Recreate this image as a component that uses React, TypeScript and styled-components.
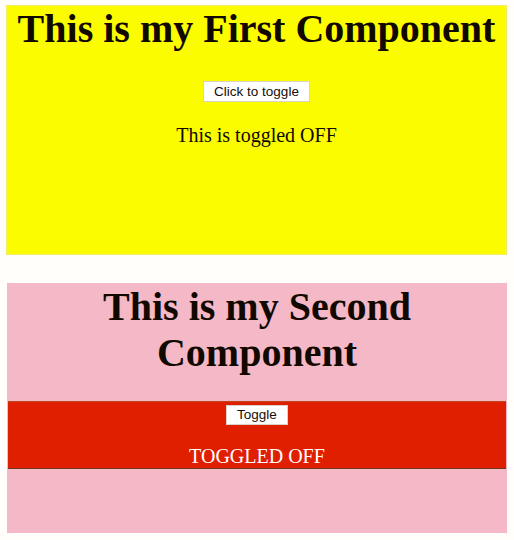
import React, { useState } from "react";
import styled, { createGlobalStyle } from "styled-components";

const Global = createGlobalStyle`
  html, body { margin: 0; padding: 0; background: #fffefb; }
  body { font-family: "Liberation Serif", "Times New Roman", serif; color: #110800; }
`;

const Page = styled.div`
  display: flex;
  flex-direction: column;
  gap: 28px;
  padding: 5px 7px 7px 6px;
  width: 501px;
`;

const Panel = styled.section<{ $bg: string; $border: string; $inset: number }>`
  box-sizing: border-box;
  height: 250px;
  margin-left: ${(p) => p.$inset}px;
  background: ${(p) => p.$bg};
  border: 1px solid ${(p) => p.$border};
  display: flex;
  flex-direction: column;
  align-items: center;
  text-align: center;
`;

const Title = styled.h1`
  margin: 0;
  font-size: 40px;
  line-height: 46px;
  font-weight: bold;
`;

const ToggleButton = styled.button<{ $mt: number; $h: number }>`
  margin-top: ${(p) => p.$mt}px;
  height: ${(p) => p.$h}px;
  box-sizing: border-box;
  padding: 0 10px;
  background: #ffffff;
  border: 1px solid #d8d2c8;
  border-radius: 0;
  font-family: "Liberation Sans", Arial, sans-serif;
  font-size: 13.5px;
  color: #1a0d05;
  line-height: 1;
  cursor: pointer;
`;

const Status = styled.p<{ $color: string; $mt: number; $upper?: boolean }>`
  margin: ${(p) => p.$mt}px 0 0;
  font-size: 20px;
  line-height: 23px;
  color: ${(p) => p.$color};
  text-transform: ${(p) => (p.$upper ? "uppercase" : "none")};
`;

const Band = styled.div<{ $on: boolean }>`
  align-self: stretch;
  margin-top: 25px;
  box-sizing: border-box;
  height: 68px;
  background: ${(p) => (p.$on ? "#1e9e30" : "#e01e00")};
  border-top: 1px solid #b8481e;
  border-bottom: 1px solid #6e3a1c;
  display: flex;
  flex-direction: column;
  align-items: center;
  padding-top: 3px;
`;

function FirstComponent() {
  const [on, setOn] = useState(false);
  return (
    <Panel $bg="#fcfc00" $border="#f2ec66" $inset={0}>
      <Title>This is my First Component</Title>
      <ToggleButton $mt={29} $h={21} onClick={() => setOn(!on)}>
        Click to toggle
      </ToggleButton>
      <Status $color="#110800" $mt={22}>
        This is toggled {on ? "ON" : "OFF"}
      </Status>
    </Panel>
  );
}

function SecondComponent() {
  const [on, setOn] = useState(false);
  return (
    <Panel $bg="#f4b8c7" $border="#f4b8c7" $inset={1}>
      <Title>This is my Second Component</Title>
      <Band $on={on}>
        <ToggleButton $mt={0} $h={22} onClick={() => setOn(!on)}>
          Toggle
        </ToggleButton>
        <Status $color="#ffffff" $mt={20} $upper>
          Toggled {on ? "On" : "Off"}
        </Status>
      </Band>
    </Panel>
  );
}

export default function App() {
  return (
    <>
      <Global />
      <Page>
        <FirstComponent />
        <SecondComponent />
      </Page>
    </>
  );
}
